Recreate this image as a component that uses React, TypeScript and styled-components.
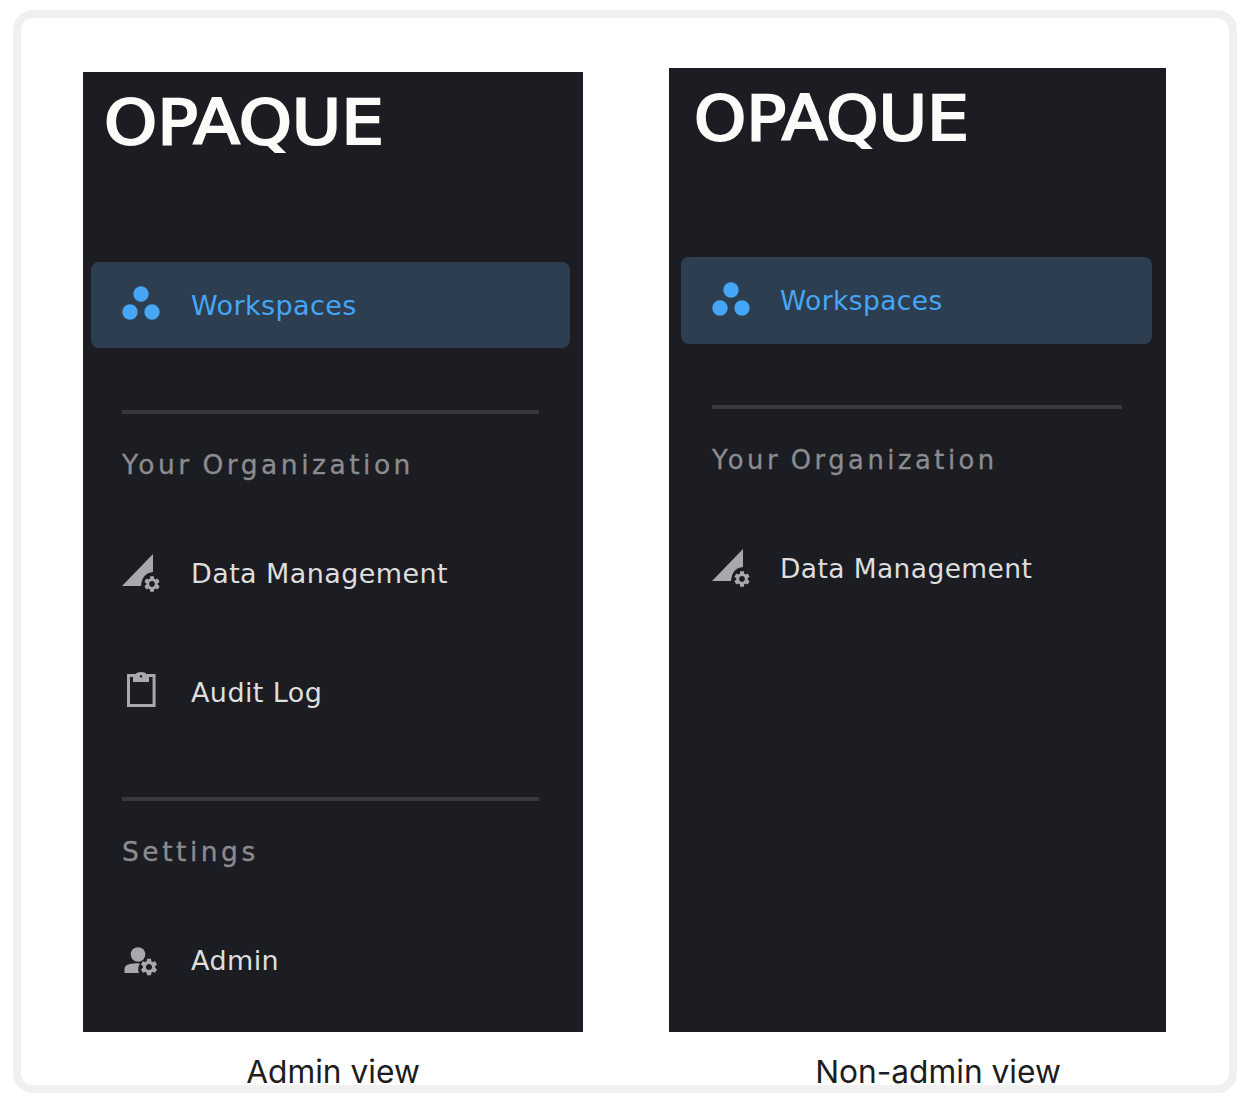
import React from "react";
import styled, { createGlobalStyle } from "styled-components";

const Global = createGlobalStyle`
  html, body { margin: 0; padding: 0; background: #fff; }
  body { font-family: "DejaVu Sans", "Liberation Sans", sans-serif; }
`;

const Frame = styled.div`
  box-sizing: border-box;
  width: 1224px;
  height: 1083px;
  margin: 10px 0 0 13px;
  border: 8px solid #f0f0f0;
  border-radius: 20px;
  padding: 0 0 0 62px;
  display: flex;
  align-items: flex-start;
  gap: 86px;
`;

const Column = styled.figure`
  margin: 0;
  display: flex;
  flex-direction: column;
`;

const Panel = styled.nav<{ $compact?: boolean }>`
  box-sizing: border-box;
  width: ${(p) => (p.$compact ? 497 : 500)}px;
  height: ${(p) => (p.$compact ? 964 : 960)}px;
  margin-top: ${(p) => (p.$compact ? 50 : 54)}px;
  background: #1b1d23;
  padding: 0 ${(p) => (p.$compact ? 14 : 13)}px 0 ${(p) => (p.$compact ? 12 : 8)}px;
  display: flex;
  flex-direction: column;
  font-family: "DejaVu Sans", "Liberation Sans", sans-serif;
`;

const Logo = styled.div<{ $compact?: boolean }>`
  height: ${(p) => (p.$compact ? 189 : 190)}px;
  padding-top: 12px;
  margin-left: 13px;
  box-sizing: border-box;
`;

const LogoText = styled.span<{ $compact?: boolean }>`
  display: inline-block;
  transform: scaleX(${(p) => (p.$compact ? 1.07 : 1.09)});
  transform-origin: left center;
  color: #fcfbf9;
  font-size: 62px;
  line-height: 78px;
  font-weight: 400;
  -webkit-text-stroke: 2.2px #fcfbf9;
`;

const NavItem = styled.a<{ $active?: boolean; $compact?: boolean }>`
  display: flex;
  align-items: center;
  height: ${(p) => (p.$compact && p.$active ? 87 : 86)}px;
  flex: none;
  border-radius: 8px;
  background: ${(p) => (p.$active ? "#2c3e50" : "transparent")};
  color: ${(p) => (p.$active ? "#46a6f5" : "#dedede")};
  font-size: ${(p) => (p.$compact ? 26.5 : 27)}px;
  letter-spacing: 0.4px;
  font-weight: 400;
`;

const IconSlot = styled.span<{ $compact?: boolean }>`
  width: ${(p) => (p.$compact ? 99 : 100)}px;
  flex: none;
  display: flex;
  padding-left: 30px;
  box-sizing: border-box;
`;

const Icon = styled.svg<{ $color?: string }>`
  width: 40px;
  height: 40px;
  display: block;
  fill: ${(p) => p.$color || "#a9a9ad"};
`;

const Divider = styled.hr<{ $compact?: boolean }>`
  flex: none;
  height: 4px;
  border: 0;
  background: #36383d;
  margin: ${(p) => (p.$compact ? 61 : 62)}px ${(p) => (p.$compact ? 30 : 31)}px 0 31px;
`;

const SectionLabel = styled.div<{ $compact?: boolean }>`
  height: 34px;
  line-height: 34px;
  flex: none;
  margin: 34px 0 48px 31px;
  color: #8c8c90;
  font-size: ${(p) => (p.$compact ? 25.8 : 26.5)}px;
  font-weight: 400;
  -webkit-text-stroke: 0.3px #8c8c90;
  letter-spacing: 3.5px;
  word-spacing: -2px;
`;

const RowGap = styled.div`
  height: 33px;
  flex: none;
`;

const Caption = styled.figcaption<{ $shift?: number }>`
  margin-top: 21px;
  text-align: center;
  padding-left: ${(p) => p.$shift || 0}px;
  font-family: "Inter", "Liberation Sans", sans-serif;
  font-size: 31.7px;
  line-height: 38px;
  color: #1d1d1f;
`;

const GEAR =
  "M19.14 12.94c.04-.3.06-.61.06-.94 0-.32-.02-.64-.07-.94l2.03-1.58c.18-.14.23-.41.12-.61l-1.92-3.32c-.12-.22-.37-.29-.59-.22l-2.39.96c-.5-.38-1.03-.7-1.62-.94l-.36-2.54c-.04-.24-.24-.41-.48-.41h-3.84c-.24 0-.43.17-.47.41l-.36 2.54c-.59.24-1.13.57-1.62.94l-2.39-.96c-.22-.08-.47 0-.59.22L2.74 8.87c-.12.21-.08.47.12.61l2.03 1.58c-.05.3-.09.63-.09.94s.02.64.07.94l-2.03 1.58c-.18.14-.23.41-.12.61l1.92 3.32c.12.22.37.29.59.22l2.39-.96c.5.38 1.03.7 1.62.94l.36 2.54c.05.24.24.41.48.41h3.84c.24 0 .44-.17.47-.41l.36-2.54c.59-.24 1.13-.56 1.62-.94l2.39.96c.22.08.47 0 .59-.22l1.92-3.32c.12-.22.07-.47-.12-.61l-2.01-1.58zM12 15.6c-1.98 0-3.6-1.62-3.6-3.6s1.62-3.6 3.6-3.6 3.6 1.62 3.6 3.6-1.62 3.6-3.6 3.6z";

const WorkspacesIcon = () => (
  <Icon viewBox="0 0 40 40" $color="#46a6f5">
    <circle cx="20" cy="9" r="7.7" />
    <circle cx="9" cy="27" r="7.7" />
    <circle cx="31" cy="27" r="7.7" />
  </Icon>
);

const DataIcon = () => (
  <Icon viewBox="0 0 40 40">
    <path d="M1 33 L32 1 V 19 Q 21 20 20 33 Z" />
    <g transform="translate(21.4 21.4) scale(0.8)">
      <path fillRule="evenodd" d={GEAR} />
    </g>
  </Icon>
);

const AuditIcon = () => (
  <Icon viewBox="0 1 40 40">
    <path
      fillRule="evenodd"
      d="M6 3 H15 V2.8 Q16 1 20 1 Q24 1 25 2.8 V3 H34.6 V36 H6 Z M9 6 V33 H31.6 V6 H28 V11 H12 V6 Z M20 4 a1.3 1.3 0 1 0 .01 0 Z"
    />
  </Icon>
);

const AdminIcon = () => (
  <Icon viewBox="0 0 40 40">
    <circle cx="17" cy="14.5" r="7.3" />
    <path d="M3.5 33 V29 Q3.5 25 9 24 Q14 23 19 23.5 Q16 28 18 33 Z" />
    <g transform="translate(17.8 16.8) scale(0.85)">
      <path fillRule="evenodd" d={GEAR} />
    </g>
  </Icon>
);

type Row = { label: string; icon: React.ReactNode; active?: boolean };

const Item = ({ row, compact }: { row: Row; compact?: boolean }) => (
  <NavItem $active={row.active} $compact={compact}>
    <IconSlot $compact={compact}>{row.icon}</IconSlot>
    {row.label}
  </NavItem>
);

const workspaces: Row = { label: "Workspaces", icon: <WorkspacesIcon />, active: true };
const data: Row = { label: "Data Management", icon: <DataIcon /> };
const audit: Row = { label: "Audit Log", icon: <AuditIcon /> };
const admin: Row = { label: "Admin", icon: <AdminIcon /> };

export default function App() {
  return (
    <>
      <Global />
      <Frame>
        <Column>
          <Panel>
            <Logo><LogoText>OPAQUE</LogoText></Logo>
            <Item row={workspaces} />
            <Divider />
            <SectionLabel>Your Organization</SectionLabel>
            <Item row={data} />
            <RowGap />
            <Item row={audit} />
            <Divider />
            <SectionLabel>Settings</SectionLabel>
            <Item row={admin} />
          </Panel>
          <Caption>Admin view</Caption>
        </Column>
        <Column>
          <Panel $compact>
            <Logo $compact><LogoText $compact>OPAQUE</LogoText></Logo>
            <Item row={workspaces} compact />
            <Divider $compact />
            <SectionLabel $compact>Your Organization</SectionLabel>
            <Item row={data} compact />
          </Panel>
          <Caption $shift={41}>Non-admin view</Caption>
        </Column>
      </Frame>
    </>
  );
}
